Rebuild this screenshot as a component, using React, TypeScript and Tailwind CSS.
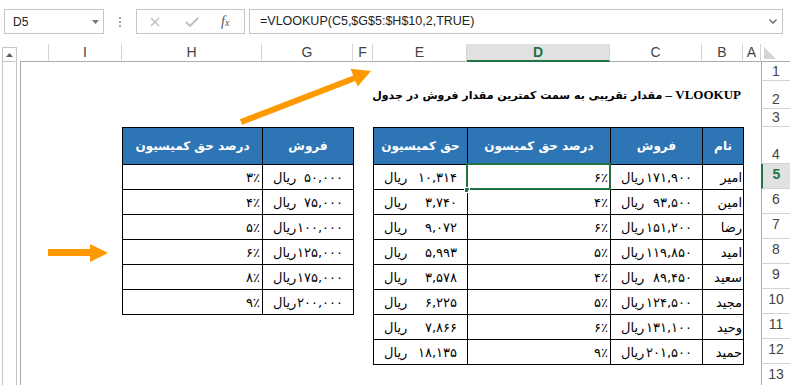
import React from "react";

const colLabels = ["", "I", "H", "G", "F", "E", "D", "C", "B", "A"];
const colStart = [
  "col-start-1",
  "col-start-2",
  "col-start-3",
  "col-start-4",
  "col-start-5",
  "col-start-6",
  "col-start-7",
  "col-start-8",
  "col-start-9",
  "col-start-10",
  "col-start-11",
];
const rowStart = [
  "row-start-1",
  "row-start-2",
  "row-start-3",
  "row-start-4",
  "row-start-5",
  "row-start-6",
  "row-start-7",
  "row-start-8",
  "row-start-9",
  "row-start-10",
  "row-start-11",
  "row-start-12",
  "row-start-13",
  "row-start-14",
];

const rates = [
  ["۳٪", "۵۰,۰۰۰"],
  ["۴٪", "۷۵,۰۰۰"],
  ["۵٪", "۱۰۰,۰۰۰"],
  ["۶٪", "۱۲۵,۰۰۰"],
  ["۸٪", "۱۷۵,۰۰۰"],
  ["۹٪", "۲۰۰,۰۰۰"],
];

const sales = [
  { name: "امیر", sale: "۱۷۱,۹۰۰", pct: "۶٪", fee: "۱۰,۳۱۴" },
  { name: "امین", sale: "۹۳,۵۰۰", pct: "۴٪", fee: "۳,۷۴۰" },
  { name: "رضا", sale: "۱۵۱,۲۰۰", pct: "۶٪", fee: "۹,۰۷۲" },
  { name: "امید", sale: "۱۱۹,۸۵۰", pct: "۵٪", fee: "۵,۹۹۳" },
  { name: "سعید", sale: "۸۹,۴۵۰", pct: "۴٪", fee: "۳,۵۷۸" },
  { name: "مجید", sale: "۱۲۴,۵۰۰", pct: "۵٪", fee: "۶,۲۲۵" },
  { name: "وحید", sale: "۱۳۱,۱۰۰", pct: "۶٪", fee: "۷,۸۶۶" },
  { name: "حمید", sale: "۲۰۱,۵۰۰", pct: "۹٪", fee: "۱۸,۱۳۵" },
];

function FormulaBar() {
  return (
    <div className="flex h-[44px] items-start pt-[9px] text-[#222]">
      <div className="ml-[4px] flex h-[25px] w-[100px] items-center justify-between border border-[#C6C6C6] pl-[8px] pr-[4px] text-[12px]">
        <span>D5</span>
        <svg width="7" height="4" viewBox="0 0 7 4">
          <path d="M0 0 H7 L3.5 4 Z" fill="#777" />
        </svg>
      </div>
      <div className="ml-[14px] flex h-[25px] w-[4px] flex-col items-center justify-center gap-[2px]">
        <span className="h-[2px] w-[2px] bg-[#A6A6A6]" />
        <span className="h-[2px] w-[2px] bg-[#A6A6A6]" />
        <span className="h-[2px] w-[2px] bg-[#A6A6A6]" />
      </div>
      <div className="ml-[14px] flex h-[25px] w-[109px] items-center border border-[#C6C6C6] pl-[13px]">
        <svg width="10" height="10" viewBox="0 0 10 10">
          <path d="M1 1 L9 9 M9 1 L1 9" stroke="#BDBDBD" strokeWidth="1.4" fill="none" />
        </svg>
        <svg className="ml-[25px]" width="14" height="10" viewBox="0 0 14 10">
          <path d="M1 5 L5 9 L13 1" stroke="#BDBDBD" strokeWidth="1.8" fill="none" />
        </svg>
        <span className="ml-[22px] font-['Liberation_Serif',serif] text-[14px] italic leading-none text-[#555]">
          f<span className="text-[10px]">x</span>
        </span>
      </div>
      <div className="ml-[4px] flex h-[25px] w-[534px] items-center justify-between border border-[#C6C6C6] pl-[10px] pr-[5px] text-[12.5px]">
        <span>=VLOOKUP(C5,$G$5:$H$10,2,TRUE)</span>
        <svg width="8" height="5" viewBox="0 0 8 5">
          <path d="M0.5 0.5 L4 4 L7.5 0.5" stroke="#666" strokeWidth="1.4" fill="none" />
        </svg>
      </div>
    </div>
  );
}

function ScrollBar() {
  return (
    <div className="w-[20px] shrink-0 pl-[2px] pt-[3px]">
      <div className="flex h-full w-[15px] flex-col border-x border-[#C6C6C6]">
        <div className="flex h-[15px] items-center justify-center border-y border-[#C6C6C6]">
          <svg width="7" height="4" viewBox="0 0 7 4">
            <path d="M0 4 H7 L3.5 0 Z" fill="#606060" />
          </svg>
        </div>
      </div>
    </div>
  );
}

function Money({ v }: { v: string }) {
  return (
    <div className="flex items-end justify-between bg-white px-[10px] pb-[3px]">
      <span>ریال</span>
      <span>{v}</span>
    </div>
  );
}

function Head({ children }: { children: React.ReactNode }) {
  return (
    <div className="flex items-center justify-center bg-[#2E75B6] text-[12px] font-bold text-white">
      {children}
    </div>
  );
}

function RatesTable() {
  return (
    <div className="col-start-3 col-span-2 row-start-5 row-span-7 grid grid-cols-[139px_90px] grid-rows-[36px_repeat(6,24px)] gap-px self-start justify-self-start bg-black p-px font-['DejaVu_Sans',sans-serif] text-[13px] leading-[16px]">
      <Head>درصد حق کمیسیون</Head>
      <Head>فروش</Head>
      {rates.map(([pct, sale]) => (
        <React.Fragment key={sale}>
          <div className="flex items-end justify-end bg-white pb-[3px] pr-[2px]">{pct}</div>
          <Money v={sale} />
        </React.Fragment>
      ))}
    </div>
  );
}

function SalesTable() {
  return (
    <div className="col-start-6 col-span-4 row-start-5 row-span-9 grid grid-cols-[93px_142px_91px_40px] grid-rows-[36px_repeat(8,24px)] gap-px self-start justify-self-start bg-black p-px font-['DejaVu_Sans',sans-serif] text-[13px] leading-[16px]">
      <Head>حق کمیسیون</Head>
      <Head>درصد حق کمیسون</Head>
      <Head>فروش</Head>
      <Head>نام</Head>
      {sales.map((r, i) => (
        <React.Fragment key={r.name}>
          <Money v={r.fee} />
          <div className="relative flex items-end justify-end bg-white pb-[3px] pr-[2px]">
            {r.pct}
            {i === 0 && (
              <>
                <div className="absolute -bottom-[1px] -left-[2px] -right-[1px] -top-[2px] border-2 border-[#217346]" />
                <div className="absolute -bottom-[4px] -left-[4px] h-[6px] w-[6px] border border-white bg-[#217346]" />
              </>
            )}
          </div>
          <Money v={r.sale} />
          <div className="flex items-end justify-end bg-white pb-[3px] pr-[1px]">{r.name}</div>
        </React.Fragment>
      ))}
    </div>
  );
}

function Sheet() {
  return (
    <div className="grid grid-cols-[29px_73px_140px_91px_20px_94px_143px_92px_41px_18px_29px] grid-rows-[18px_19px_28px_18px_37px_repeat(9,25px)]">
      {colLabels.map((c, i) => (
        <div
          key={i}
          className={`${colStart[i]} row-start-1 flex items-center justify-center border-r border-b border-[#D4D4D4] text-[14px] ${
            c === "D"
              ? "border-b-2 border-b-[#217346] bg-[#E1E1E1] font-bold text-[#217346]"
              : "border-b-[#ABABAB] text-[#444]"
          }`}
        >
          {c}
        </div>
      ))}
      <div className="col-start-11 row-start-1 border-b border-[#ABABAB]">
        <svg width="29" height="17" viewBox="0 0 29 17">
          <path d="M3 3 V15 H15 Z" fill="#D4D4D4" />
        </svg>
      </div>
      {Array.from({ length: 13 }, (_, i) => (
        <div
          key={i}
          className={`${rowStart[i + 1]} col-start-11 flex items-end justify-center border-b border-[#D4D4D4] text-[14px] leading-[17px] ${
            i >= 4 ? "pb-[5px]" : ""
          } ${
            i === 4
              ? "border-l-2 border-l-[#217346] bg-[#E1E1E1] font-bold text-[#217346]"
              : "border-l border-l-[#ABABAB] text-[#444]"
          }`}
        >
          {i + 1}
        </div>
      ))}
      <div className="col-start-1 row-start-2 row-span-13 border-l border-[#ABABAB]" />
      <div className="col-start-2 col-end-10 row-start-3 flex items-center justify-end pr-[2px]">
        <span dir="rtl" className="font-['Liberation_Serif',serif] text-[13px] font-bold">
          VLOOKUP –{" "}
          <span className="font-['DejaVu_Sans',sans-serif] text-[11px]">
            مقدار تقریبی به سمت کمترین مقدار فروش در جدول
          </span>
        </span>
      </div>
      <RatesTable />
      <SalesTable />
    </div>
  );
}

function Arrows() {
  return (
    <svg className="pointer-events-none absolute left-0 top-0" width="790" height="385" viewBox="0 0 790 385">
      <path d="M241 122 L355 78" stroke="#FF9900" strokeWidth="6" />
      <path d="M371 71 L350.5 68.8 L357.7 86.4 Z" fill="#FF9900" />
      <rect x="48" y="249" width="43" height="7" fill="#FF9900" />
      <path d="M90 244 L108 253 L90 262 Z" fill="#FF9900" />
    </svg>
  );
}

export default function App() {
  return (
    <div className="relative h-[385px] w-[790px] overflow-hidden bg-white font-['Liberation_Sans',sans-serif] text-black">
      <FormulaBar />
      <div className="flex h-[341px]">
        <ScrollBar />
        <Sheet />
      </div>
      <Arrows />
    </div>
  );
}
